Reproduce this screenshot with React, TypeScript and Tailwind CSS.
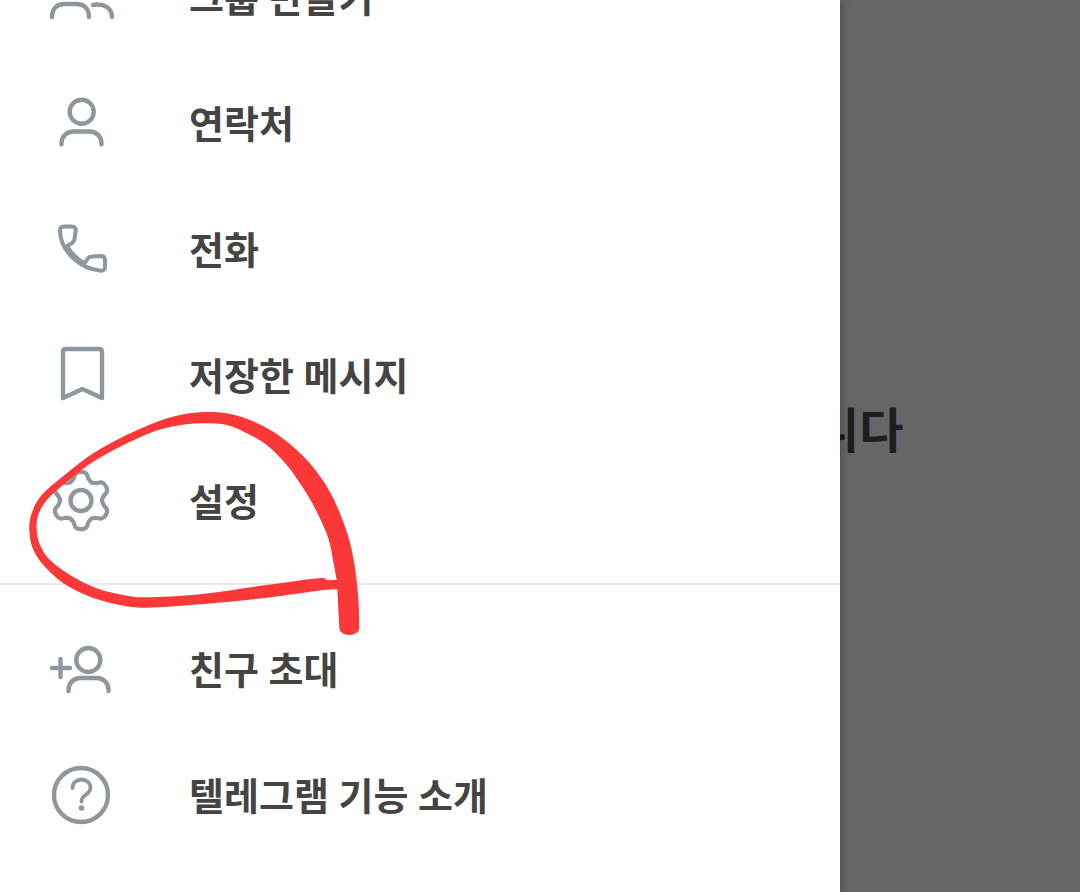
import React from "react";

type P = [number, number];

const outer: P[] = [
  [359.3, 628], [358.3, 598.3], [354, 561.7], [346.7, 531.7], [333.3, 498.3], [316.7, 471.7], [296.7, 450], [273.3, 431.7], [250, 420], [226.7, 413.3], [200, 412.3], [176.7, 415.7], [153.3, 423.3], [120, 438.3], [93.3, 453.3], [66.7, 473.3], [41.7, 495], [31.7, 513.3], [29.3, 530], [32.7, 548.3], [43.3, 565], [63.3, 583.3], [90, 596.7], [120, 605], [146.7, 607.7], [200, 604.3], [266.7, 597.7], [323.3, 590], [337.3, 589.3],
];
const inner: P[] = [
  [336.7, 580], [326.7, 580], [318.3, 578.3], [266.7, 585], [200, 594.3], [146.7, 597.3], [123.3, 595], [96.7, 588.3], [70, 575], [50, 560], [40, 545], [36.7, 530], [38.3, 515], [48.3, 498.3], [73.3, 476.7], [93.3, 461.7], [120, 446.7], [153.3, 431.7], [176.7, 425.7], [200, 423.3], [226.7, 425], [246.7, 433.3], [266.7, 445], [286.7, 465], [303.3, 488.3], [316.7, 511.7], [328.3, 538.3], [333.3, 561.7], [336.7, 580],
];

function spline(p: P[]) {
  let d = `M${p[0][0]} ${p[0][1]}`;
  for (let i = 0; i < p.length - 1; i++) {
    const a = p[Math.max(i - 1, 0)], b = p[i], c = p[i + 1], e = p[Math.min(i + 2, p.length - 1)];
    d += ` C${b[0] + (c[0] - a[0]) / 6} ${b[1] + (c[1] - a[1]) / 6} ${c[0] - (e[0] - b[0]) / 6} ${c[1] - (e[1] - b[1]) / 6} ${c[0]} ${c[1]}`;
  }
  return d;
}

const scribble = spline(outer) + " L339.3 628 A10 7 0 0 0 359.3 628 Z " + spline(inner) + " Z";

const gearPts: P[] = [];
for (let k = 0; k < 6; k++) {
  const base = k * 60;
  const prof: [number, number][] = [[-30, 21], [-19, 23], [-12, 27], [-5, 28.5], [5, 28.5], [12, 27], [19, 23]];
  for (const [da, r] of prof) {
    const t = ((base + da) * Math.PI) / 180;
    gearPts.push([30 + r * Math.sin(t), 29.5 - r * Math.cos(t)]);
  }
}
gearPts.push(gearPts[0]);
const gear = spline(gearPts) + " Z";

function Ico({ children }: { children: React.ReactNode }) {
  return (
    <svg width="60" height="60" viewBox="0 0 60 60" fill="none" stroke="#8e979e" strokeWidth="4.4" strokeLinecap="round" strokeLinejoin="round" className="shrink-0 overflow-visible">
      {children}
    </svg>
  );
}

function Row({ icon, label }: { icon: React.ReactNode; label: string }) {
  return (
    <div className="flex h-[126px] items-center pl-[51px]">
      <Ico>{icon}</Ico>
      <span className="ml-[78px] pb-[3px] whitespace-nowrap font-['Noto_Sans_CJK_KR','Noto_Sans',sans-serif] text-[38px] leading-none font-bold [word-spacing:1px] text-[#444444]">{label}</span>
    </div>
  );
}

export default function App() {
  return (
    <div className="relative flex h-[892px] w-[1080px] overflow-hidden bg-[#666666]">
      <div className="relative z-10 h-[892px] w-[840px] shrink-0 overflow-hidden bg-white shadow-[2px_0_7px_rgba(0,0,0,0.25)]">
        <div className="-mt-[66px]">
          <Row label="그룹 만들기" icon={<><path d="M1 50c0-8 5-13 12-13h13c7 0 12 5 12 13" /><path d="M42 38c11-2 19 3 19 12" /></>} />
          <Row label="연락처" icon={<><circle cx="30.7" cy="18.7" r="12" /><path d="M10.5 51.5v-1c0-7 5-12 12-12h16c7 0 12 5 12 12v1" /></>} />
          <Row label="전화" icon={<path strokeWidth="4" transform="translate(2 0)" d="M11 7.5h8c2.5 0 4 1.5 3.7 4l-1.200 8.500c-.3 2-1 3-2.500 4l-5 3c4 7 10 13 17.500 17.500l3-4.500c1-1.500 2.500-2.500 4.500-2.500l9-.5c2.500 0 4 1.500 4 4v7c0 2.500-1.500 4-4 3.700C26 50 7 31 7 11.500c0-2.500 1.500-4 4-4z" />} />
          <Row label="저장한 메시지" icon={<path d="M12 7c0-2 1-3 3-3h33c2 0 3 1 3 3v46l-19.500-9-19.500 9z" />} />
          <Row label="설정" icon={<><path strokeWidth="4.200" d={gear} /><circle cx="30" cy="29.500" r="10.500" /></>} />
          <div className="mt-[19px] mb-[21px] h-[2px] bg-[#e9e9e9]" />
          <Row label="친구 초대" icon={<><circle cx="37.3" cy="21" r="12" /><path d="M17.500 52v-1c0-7 5-12 12-12h16c7 0 12 5 12 12v1" /><path d="M1 29h18M9.500 20v18" /></>} />
          <Row label="텔레그램 기능 소개" icon={<><circle cx="30" cy="30" r="27" /><path strokeWidth="3.800" d="M21.500 23c0-5 4-8.500 9-8.500s9 3.500 9 8c0 4-2.500 5.800-5 7.500-2.500 1.700-4 3-4 6.500" /><circle cx="30.500" cy="43" r="1.300" strokeWidth="3" /></>} />
        </div>
      </div>
      <div className="flex flex-1 items-start pt-[393px]">
        <span className="-ml-[25px] font-['Noto_Sans_CJK_KR',sans-serif] text-[48px] leading-[68px] font-bold whitespace-nowrap text-[#1e1e1e]">니다</span>
      </div>
      <svg className="absolute top-[405px] left-0 z-20" width="370" height="235" viewBox="0 405 370 235">
        <path fill="#fb3838" fillRule="evenodd" d={scribble} />
      </svg>
    </div>
  );
}
